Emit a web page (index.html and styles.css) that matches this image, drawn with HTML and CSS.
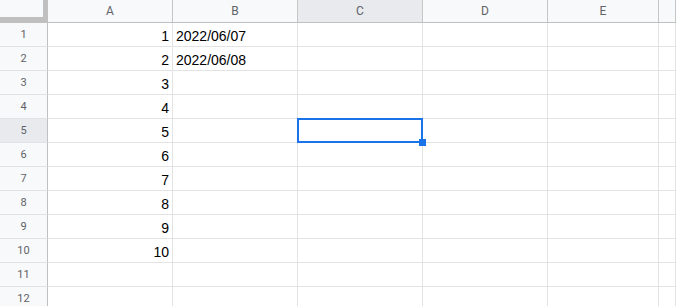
FILE: index.html
```html
<!DOCTYPE html>
<html lang="en">
<head>
    <meta charset="UTF-8">
    <meta name="viewport" content="width=device-width, initial-scale=1.0">
    <title>Sheet</title>
    <link rel="stylesheet" href="styles.css">
</head>
<body>
    <div class="grid">
        <div class="corner"></div>
        <div class="col-head">A</div>
        <div class="col-head">B</div>
        <div class="col-head active">C</div>
        <div class="col-head">D</div>
        <div class="col-head">E</div>
        <div class="col-head"></div>

        <div class="row-head">1</div><div class="cell num">1</div><div class="cell">2022/06/07</div><div class="cell"></div><div class="cell"></div><div class="cell"></div><div class="cell"></div>
        <div class="row-head">2</div><div class="cell num">2</div><div class="cell">2022/06/08</div><div class="cell"></div><div class="cell"></div><div class="cell"></div><div class="cell"></div>
        <div class="row-head">3</div><div class="cell num">3</div><div class="cell"></div><div class="cell"></div><div class="cell"></div><div class="cell"></div><div class="cell"></div>
        <div class="row-head">4</div><div class="cell num">4</div><div class="cell"></div><div class="cell"></div><div class="cell"></div><div class="cell"></div><div class="cell"></div>
        <div class="row-head active">5</div><div class="cell num">5</div><div class="cell"></div><div class="cell selected"><span class="handle"></span></div><div class="cell"></div><div class="cell"></div><div class="cell"></div>
        <div class="row-head">6</div><div class="cell num">6</div><div class="cell"></div><div class="cell"></div><div class="cell"></div><div class="cell"></div><div class="cell"></div>
        <div class="row-head">7</div><div class="cell num">7</div><div class="cell"></div><div class="cell"></div><div class="cell"></div><div class="cell"></div><div class="cell"></div>
        <div class="row-head">8</div><div class="cell num">8</div><div class="cell"></div><div class="cell"></div><div class="cell"></div><div class="cell"></div><div class="cell"></div>
        <div class="row-head">9</div><div class="cell num">9</div><div class="cell"></div><div class="cell"></div><div class="cell"></div><div class="cell"></div><div class="cell"></div>
        <div class="row-head">10</div><div class="cell num">10</div><div class="cell"></div><div class="cell"></div><div class="cell"></div><div class="cell"></div><div class="cell"></div>
        <div class="row-head">11</div><div class="cell num"></div><div class="cell"></div><div class="cell"></div><div class="cell"></div><div class="cell"></div><div class="cell"></div>
        <div class="row-head">12</div><div class="cell num"></div><div class="cell"></div><div class="cell"></div><div class="cell"></div><div class="cell"></div><div class="cell"></div>
    </div>
</body>
</html>
```

FILE: styles.css
```css
body {
    margin: 0;
    padding: 0;
    background: #fff;
    overflow: hidden;
}

.grid {
    display: grid;
    grid-template-columns: 48px 125px 125px 125px 125px 111px 1fr;
    grid-template-rows: 23px;
    grid-auto-rows: 24px;
    width: 676px;
}

.grid > div {
    box-sizing: border-box;
    border-right: 1px solid #e2e3e3;
    border-bottom: 1px solid #e2e3e3;
}

.corner {
    background: #f8f9fa;
    border-right: 5px solid #c0c0c0 !important;
    border-bottom: 6px solid #c0c0c0 !important;
}

.col-head {
    background: #f8f9fa;
    border-right-color: #c4c7c5 !important;
    border-bottom-color: #c0c0c0 !important;
    color: #5f6368;
    font-family: Roboto, "Liberation Sans", sans-serif;
    font-size: 12px;
    display: flex;
    align-items: center;
    justify-content: center;
}

.row-head {
    background: #f8f9fa;
    border-right-color: #c0c0c0 !important;
    border-bottom-color: #e0e2e3 !important;
    color: #5f6368;
    font-family: Roboto, "Liberation Sans", sans-serif;
    font-size: 11px;
    display: flex;
    align-items: center;
    justify-content: center;
}

.active {
    background: #e8eaed;
}

.cell {
    font-family: "Liberation Sans", Arial, sans-serif;
    font-size: 14px;
    color: #000;
    display: flex;
    align-items: flex-end;
    padding: 0 3px 2px 3px;
}

.num {
    justify-content: flex-end;
}

.selected {
    position: relative;
}

.selected::after {
    content: "";
    position: absolute;
    top: -1px;
    left: -1px;
    right: -1px;
    bottom: -1px;
    border: 2px solid #1a73e8;
}

.handle {
    position: absolute;
    right: -4px;
    bottom: -4px;
    width: 7px;
    height: 7px;
    background: #1a73e8;
    z-index: 1;
}
```
